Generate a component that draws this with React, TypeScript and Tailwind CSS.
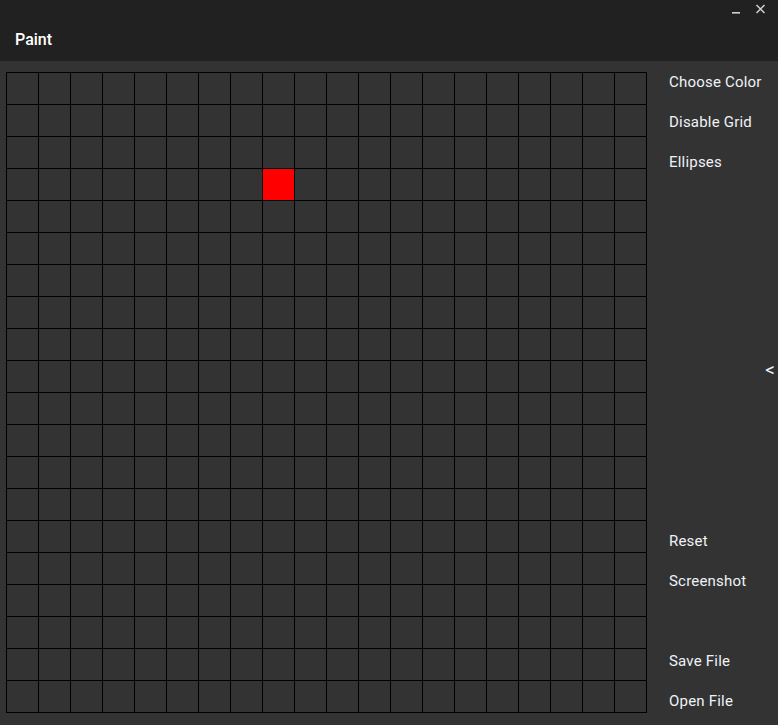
// Paint app window: title bar, 20x20 pixel grid and a side panel of actions.
const ROWS = 20;
const COLS = 20;
const painted = new Set(["3:8"]);

const topActions = ["Choose Color", "Disable Grid", "Ellipses"];
const bottomActions = ["Reset", "Screenshot", "", "Save File", "Open File"];

function ActionButton({ label }: { label: string }) {
  return (
    <div className="flex h-10 items-center pl-[22px] text-[15px] tracking-[0.2px] text-[#eef2f7]">
      {label}
    </div>
  );
}

export default function App() {
  return (
    <div
      className="flex h-[725px] w-[778px] flex-col overflow-hidden bg-[#333333]"
      style={{ fontFamily: "Roboto, 'Noto Sans', sans-serif" }}
    >
      <header className="relative h-[61px] shrink-0 bg-[#212121]">
        <div className="pl-[15px] pt-[30px] text-[16px] font-medium leading-5 text-white">Paint</div>
        <div className="absolute right-[12px] top-[2px] flex items-center gap-[14px] text-[#d0d0d0]">
          <svg width="10" height="14" viewBox="0 0 10 14">
            <rect x="1" y="10" width="8" height="1.6" fill="currentColor" />
          </svg>
          <svg width="11" height="14" viewBox="0 0 11 14">
            <path d="M1.5 3 L9.5 11 M9.5 3 L1.5 11" stroke="currentColor" strokeWidth="1.5" />
          </svg>
        </div>
      </header>

      <div className="flex flex-1">
        <div className="pl-[6px] pt-[11px]">
          <div className="grid grid-cols-[repeat(20,32px)] border-r border-b border-black">
            {Array.from({ length: ROWS * COLS }, (_, i) => {
              const r = Math.floor(i / COLS);
              const c = i % COLS;
              return (
                <div
                  key={i}
                  className={
                    painted.has(`${r}:${c}`)
                      ? "h-8 w-8 border-l border-t border-black bg-[#ff0000]"
                      : "h-8 w-8 border-l border-t border-black bg-[#333333]"
                  }
                />
              );
            })}
          </div>
        </div>

        <aside className="relative flex flex-1 flex-col pb-[4px] pt-[1px]">
          {topActions.map((a) => (
            <ActionButton key={a} label={a} />
          ))}
          <div className="flex-1" />
          {bottomActions.map((a, i) => (
            <ActionButton key={i} label={a} />
          ))}
          <div className="absolute right-[3px] top-[299px] text-[19px] leading-5 text-[#eef2f7]">&lt;</div>
        </aside>
      </div>
    </div>
  );
}
